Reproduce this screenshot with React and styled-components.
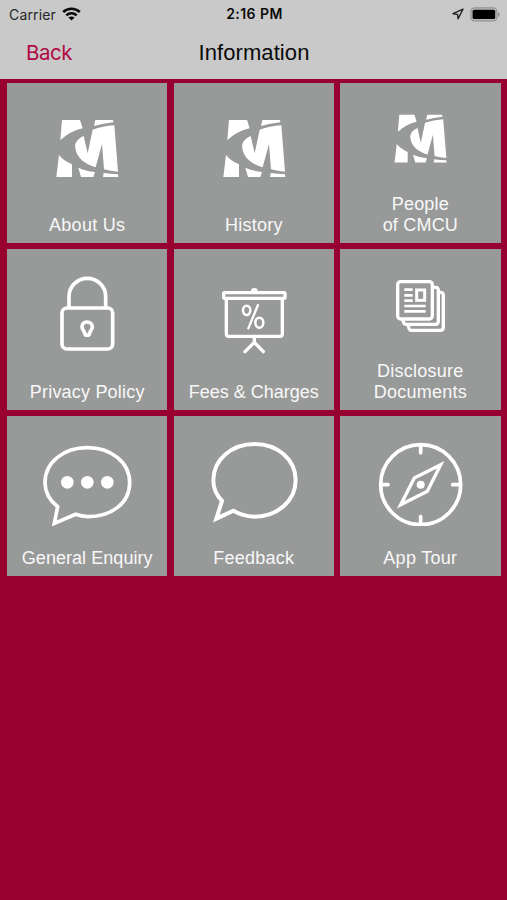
import React from "react";
import styled, { createGlobalStyle } from "styled-components";

const GlobalStyle = createGlobalStyle`
  * { box-sizing: border-box; }
  body { margin: 0; background: #980032; }
`;

const Screen = styled.main`
  min-height: 900px;
  background: #980032;
  font-family: "Liberation Sans", Arial, sans-serif;
`;

const Header = styled.header`
  height: 79px;
  background: #c9c9c9;
  color: #0b0b0b;
`;

const StatusBar = styled.div`
  height: 27px;
  padding: 0 7px 0 9px;
  display: grid;
  grid-template-columns: 1fr auto 1fr;
  align-items: center;
  font: 400 14px/27px Inter, sans-serif;
`;

const StatusGroup = styled.div`
  display: flex;
  align-items: center;
  gap: ${(p) => p.$gap}px;
  justify-content: ${(p) => (p.$end ? "flex-end" : "flex-start")};
`;

const Carrier = styled.span`
  color: #262626;
  letter-spacing: 0.15px;
`;

const Clock = styled.span`
  font-weight: 600;
  font-size: 14px;
  line-height: 28px;
  letter-spacing: 0.45px;
`;

const NavBar = styled.nav`
  height: 52px;
  padding: 0 25px 0 26px;
  display: grid;
  grid-template-columns: 1fr auto 1fr;
  align-items: center;
`;

const BackButton = styled.button`
  justify-self: start;
  padding: 0;
  border: 0;
  background: none;
  color: #b00b45;
  font: 400 20.5px/50px Inter, sans-serif;
  letter-spacing: -0.45px;
`;

const Title = styled.h1`
  margin: 0;
  font-size: 22px;
  font-weight: 400;
  line-height: 50px;
  letter-spacing: 0.08px;
`;

const TileGrid = styled.section`
  display: grid;
  grid-template-columns: repeat(3, 160.4px);
  grid-auto-rows: 160.4px;
  gap: 6.2px;
  padding: 3.9px 0 0 7px;
`;

const Tile = styled.a`
  display: flex;
  flex-direction: column;
  justify-content: space-between;
  padding-bottom: 7px;
  background: #989a99;
  color: #fff;
`;

const TileIcon = styled.svg`
  display: block;
  width: 160px;
  height: 110px;
  fill: none;
  stroke: #fff;
  stroke-width: ${(p) => p.$stroke || 11};
  stroke-linejoin: ${(p) => (p.$sharp ? "miter" : "round")};
`;

const Label = styled.span`
  color: #f8f8f8;
  font-size: 18px;
  line-height: 21px;
  letter-spacing: ${(p) => p.$tracking || 0}px;
  text-align: center;
  white-space: pre-line;
`;

const Wifi = () => (
  <svg width="19" height="14" viewBox="0 0 19 14" fill="none" stroke="#0b0b0b" strokeWidth="2.6">
    <path d="M1.2 5C5.8 .6 13.2 .6 17.8 5" />
    <path d="M4.3 8.4c3-2.8 7.4-2.8 10.4 0" />
    <path d="M9.5 13.6 6.4 10.6c1.8-1.6 4.4-1.6 6.2 0z" fill="#0b0b0b" stroke="none" />
  </svg>
);

const LocationArrow = () => (
  <svg width="12" height="12" viewBox="0 0 12 12" fill="none" stroke="#222" strokeWidth="1.4" strokeLinejoin="round">
    <path d="M11 1.2 1 5.7l4.6.7.5 4.4z" />
  </svg>
);

const Battery = () => (
  <svg width="30" height="15" viewBox="0 0 30 15">
    <rect x=".9" y=".9" width="26" height="13" rx="3.6" fill="#bdbdbd" stroke="#919191" strokeWidth="1.1" />
    <rect x="2.6" y="2.8" width="22.6" height="9.2" rx="1.5" fill="#000" />
    <path d="M28 5.2c2.2.7 2.2 3.9 0 4.6z" fill="#919191" />
  </svg>
);

const Emblem = ({ viewBox = "-129 -81 480 330" }) => (
  <TileIcon viewBox={viewBox}>
    <g fill="#fff" stroke="none">
      <path d="M36 30H90L98 55Q60 63 31 91Z" />
      <path d="M27 135Q41 153 66 163V201H19Z" />
      <path d="M136 30H189L190 37Q158 40 132 48Z" />
      <path d="M101 78C83 86 73 99 76 115C80 145 106 163 137 172L156 102L162 178Q182 184 204 185L193 46Q158 48 128 59L113 130Z" />
      <path d="M85 173Q106 183 135 186L130 201H93Z" />
      <path d="M161 189Q182 192 204 193L205 201H159Z" />
    </g>
  </TileIcon>
);

const Padlock = () => (
  <TileIcon viewBox="21 14 480 330">
    <path d="M207 189V156a55 54 0 0 1 110 0V189" />
    <rect x="186" y="191" width="152" height="123" rx="15" />
    <path d="M261 233c-10 0-15 7-15 15 0 8 6 10 8 18 1 9 14 9 15 0 2-8 8-10 8-18 0-8-6-15-16-15z" />
  </TileIcon>
);

const ChargesBoard = () => (
  <TileIcon viewBox="17 14 480 330" $stroke={10}>
    <rect x="166" y="145" width="184" height="17" rx="3" />
    <path d="M174 162V269Q174 276 181 276H335Q342 276 342 269V162" />
    <path d="M248 141a10 10 0 0 1 20 0z" fill="#fff" stroke="none" />
    <path d="M258 276V294M230 322L258 294L285 322" strokeLinecap="round" />
    <ellipse cx="235" cy="198" rx="11" ry="14" strokeWidth="7.5" />
    <ellipse cx="273" cy="235" rx="12" ry="15" strokeWidth="7.5" />
    <path d="M269 182L240 252" strokeWidth="7" strokeLinecap="round" />
  </TileIcon>
);

const Papers = () => (
  <TileIcon viewBox="19 14 480 330" $stroke={10}>
    <rect x="192" y="112" width="104" height="112" rx="9" />
    <path d="M298 129H305Q314 129 314 138V231Q314 240 305 240H217Q209 240 208 226" />
    <path d="M315 144H320Q329 144 329 153V249Q329 258 320 258H233Q225 258 224 243" />
    <path d="M212 136H237M212 153H237M212 169H237M212 185H276M212 201H276" strokeWidth="8" />
    <rect x="249" y="137" width="24" height="31" strokeWidth="9" strokeLinejoin="miter" />
  </TileIcon>
);

const EnquiryBubble = () => (
  <TileIcon viewBox="21 12 480 330" $sharp>
    <path d="M173 284C149 265 135 241 135 212C135 150 192 107 262 107S389 150 389 212S334 314 264 314Q243 313 227 307L163 334Z" />
    <g fill="#fff" stroke="none">
      <circle cx="202" cy="211" r="19" />
      <circle cx="262" cy="211" r="19" />
      <circle cx="322" cy="211" r="19" />
    </g>
  </TileIcon>
);

const FeedbackBubble = () => (
  <TileIcon viewBox="17 12 480 330" $sharp $stroke={12}>
    <path d="M161 267C144 250 135 229 135 205C135 142 191 96 259 96S382 142 382 205S325 314 258 314Q222 313 195 296L144 320Z" />
  </TileIcon>
);

const Compass = () => (
  <TileIcon viewBox="19 12 480 330" $sharp>
    <circle cx="261" cy="218" r="120" />
    <path d="M261 103V122M261 314V333M142 218H163M357 218H379" strokeLinecap="round" />
    <path d="M321 158L242 198L201 278L281 238Z" strokeWidth="10" />
    <circle cx="261" cy="218" r="12" fill="#fff" stroke="none" />
  </TileIcon>
);

const tiles = [
  { label: "About Us", icon: <Emblem />, tracking: 0.3 },
  { label: "History", icon: <Emblem />, tracking: 0.25 },
  { label: "People\nof CMCU", icon: <Emblem viewBox="-175.7 -83.2 571.4 393" />, tracking: 0.2 },
  { label: "Privacy Policy", icon: <Padlock />, tracking: 0.2 },
  { label: "Fees & Charges", icon: <ChargesBoard /> },
  { label: "Disclosure\nDocuments", icon: <Papers />, tracking: 0.25 },
  { label: "General Enquiry", icon: <EnquiryBubble />, tracking: 0.05 },
  { label: "Feedback", icon: <FeedbackBubble />, tracking: 0.25 },
  { label: "App Tour", icon: <Compass />, tracking: 0.3 },
];

export default function App() {
  return (
    <Screen>
      <GlobalStyle />
      <Header>
        <StatusBar>
          <StatusGroup $gap={6}>
            <Carrier>Carrier</Carrier>
            <Wifi />
          </StatusGroup>
          <Clock>2:16 PM</Clock>
          <StatusGroup $gap={6} $end>
            <LocationArrow />
            <Battery />
          </StatusGroup>
        </StatusBar>
        <NavBar>
          <BackButton>Back</BackButton>
          <Title>Information</Title>
        </NavBar>
      </Header>
      <TileGrid>
        {tiles.map(({ label, icon, tracking }) => (
          <Tile key={label}>
            {icon}
            <Label $tracking={tracking}>{label}</Label>
          </Tile>
        ))}
      </TileGrid>
    </Screen>
  );
}
